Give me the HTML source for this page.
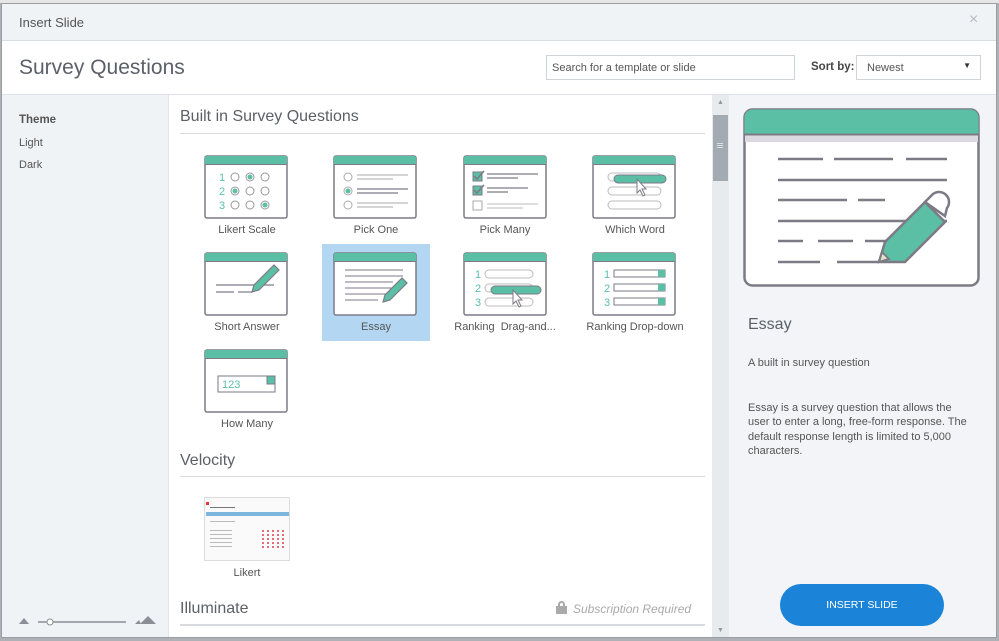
<!DOCTYPE html>
<html><head><meta charset="utf-8">
<style>
*{margin:0;padding:0;box-sizing:border-box}
body{width:999px;height:641px;overflow:hidden;background:#aeb1b5;font-family:"Liberation Sans",sans-serif;color:#555;position:relative}
.a{position:absolute}
.win{left:1px;top:3px;width:996px;height:635px;background:#fff;border:1px solid #9a9da2;overflow:hidden}
.lbl{position:absolute;font-size:11px;color:#555;text-align:center;width:130px}
svg.t{position:absolute}
</style></head><body>
<div class="a" style="left:0;top:0;width:999px;height:3px;background:#e6e6e6"></div>
<div class="a win">
 <div class="a" style="left:0;top:0;width:996px;height:37px;background:#f0f3f6;border-bottom:1px solid #d9dee3"></div>
 <div class="a" style="left:17px;top:11px;font-size:13px;color:#555">Insert Slide</div>
 <div class="a" style="left:967px;top:7px;font-size:16px;color:#b8bcc0">×</div>
 <div class="a" style="left:17px;top:52px;font-size:21px;color:#5c6068">Survey Questions</div>
 <div class="a" style="left:544px;top:51px;width:249px;height:25px;border:1px solid #cfd4d9;font-size:11px;color:#555;padding:6px 5px">Search for a template or slide</div>
 <div class="a" style="left:809px;top:57px;font-size:11.5px;color:#444;font-weight:bold">Sort by:</div>
 <div class="a" style="left:854px;top:51px;width:125px;height:25px;border:1px solid #cfd4d9;font-size:11px;color:#555;padding:6px 10px">Newest<span style="position:absolute;right:9px;top:5px;font-size:8px;color:#333">▼</span></div>
 <div class="a" style="left:0;top:90px;width:996px;height:1px;background:#dfe3e7"></div>
 <!-- sidebar -->
 <div class="a" style="left:0;top:91px;width:167px;height:545px;background:#f0f3f6;border-right:1px solid #e1e5e9"></div>
 <div class="a" style="left:17px;top:110px;font-size:11.5px;font-weight:bold;color:#555">Theme</div>
 <div class="a" style="left:17px;top:133px;font-size:11px;color:#555">Light</div>
 <div class="a" style="left:17px;top:155px;font-size:11px;color:#555">Dark</div>
 <svg class="a" style="left:14px;top:610px" width="145" height="14"><polygon points="3,10 8,4 13,10" fill="#8a8f96"/><line x1="22" y1="8" x2="110" y2="8" stroke="#8a8f96" stroke-width="1.5"/><circle cx="34" cy="8" r="3" fill="#fff" stroke="#8a8f96"/><polygon points="119,10 123,6 125,10" fill="#8a8f96"/><polygon points="124,10 132,2 140,10" fill="#8a8f96"/></svg>
 <!-- main -->
 <div class="a" style="left:178px;top:104px;font-size:16px;color:#5c6068">Built in Survey Questions</div>
 <div class="a" style="left:178px;top:129px;width:525px;height:1px;background:#d7dbdf"></div>
 <div class="a" style="left:320px;top:240px;width:108px;height:97px;background:#b3d7f2"></div>

 <div class="lbl" style="left:180px;top:220px">Likert Scale</div>
 <div class="lbl" style="left:309px;top:220px">Pick One</div>
 <div class="lbl" style="left:438px;top:220px">Pick Many</div>
 <div class="lbl" style="left:568px;top:220px">Which Word</div>
 <div class="lbl" style="left:180px;top:317px">Short Answer</div>
 <div class="lbl" style="left:309px;top:317px">Essay</div>
 <div class="lbl" style="left:438px;top:317px">Ranking&nbsp; Drag-and...</div>
 <div class="lbl" style="left:568px;top:317px">Ranking Drop-down</div>
 <div class="lbl" style="left:180px;top:414px">How Many</div>

 <svg class="t" style="left:202px;top:151px" width="84" height="64" viewBox="0 0 84 64"><rect x="1" y="1" width="82" height="62" rx="2" fill="#fff" stroke="#7d7a86" stroke-width="1.5"/><path d="M1 9V3a2 2 0 0 1 2-2h78a2 2 0 0 1 2 2v6z" fill="#5bbfa6"/><line x1="1" y1="9.5" x2="83" y2="9.5" stroke="#7d7a86"/>
 <g font-size="11" fill="#5bbfa6" font-family="Liberation Sans"><text x="15" y="26">1</text><text x="15" y="40">2</text><text x="15" y="54">3</text></g>
 <g fill="#fff" stroke="#999" stroke-width="1"><circle cx="31" cy="22" r="4"/><circle cx="46" cy="22" r="4"/><circle cx="61" cy="22" r="4"/><circle cx="31" cy="36" r="4"/><circle cx="46" cy="36" r="4"/><circle cx="61" cy="36" r="4"/><circle cx="31" cy="50" r="4"/><circle cx="46" cy="50" r="4"/><circle cx="61" cy="50" r="4"/></g>
 <g fill="#5bbfa6"><circle cx="46" cy="22" r="2.5"/><circle cx="31" cy="36" r="2.5"/><circle cx="61" cy="50" r="2.5"/></g></svg>

 <svg class="t" style="left:331px;top:151px" width="84" height="64" viewBox="0 0 84 64"><rect x="1" y="1" width="82" height="62" rx="2" fill="#fff" stroke="#7d7a86" stroke-width="1.5"/><path d="M1 9V3a2 2 0 0 1 2-2h78a2 2 0 0 1 2 2v6z" fill="#5bbfa6"/><line x1="1" y1="9.5" x2="83" y2="9.5" stroke="#7d7a86"/>
 <g fill="#fff" stroke="#aaa"><circle cx="15" cy="22" r="4"/><circle cx="15" cy="36" r="4"/><circle cx="15" cy="50" r="4"/></g><circle cx="15" cy="36" r="2.5" fill="#5bbfa6"/>
 <g stroke="#aaa" stroke-width="1"><line x1="24" y1="20" x2="75" y2="20"/><line x1="24" y1="24" x2="60" y2="24"/><line x1="24" y1="48" x2="75" y2="48"/><line x1="24" y1="52" x2="60" y2="52"/></g><g stroke="#7d7a86" stroke-width="1.3"><line x1="24" y1="34" x2="75" y2="34"/><line x1="24" y1="38" x2="65" y2="38"/></g></svg>

 <svg class="t" style="left:461px;top:151px" width="84" height="64" viewBox="0 0 84 64"><rect x="1" y="1" width="82" height="62" rx="2" fill="#fff" stroke="#7d7a86" stroke-width="1.5"/><path d="M1 9V3a2 2 0 0 1 2-2h78a2 2 0 0 1 2 2v6z" fill="#5bbfa6"/><line x1="1" y1="9.5" x2="83" y2="9.5" stroke="#7d7a86"/>
 <rect x="10" y="17" width="9" height="9" fill="#5bbfa6" stroke="#7d7a86"/><rect x="10" y="31" width="9" height="9" fill="#5bbfa6" stroke="#7d7a86"/><rect x="10" y="46" width="9" height="9" fill="#fff" stroke="#aaa"/>
 <path d="M11 21l3 3 7-8M11 35l3 3 7-8" stroke="#7d7a86" stroke-width="1.5" fill="none"/>
 <g stroke="#7d7a86" stroke-width="1.2"><line x1="24" y1="19" x2="75" y2="19"/><line x1="24" y1="23" x2="55" y2="23"/><line x1="24" y1="33" x2="65" y2="33"/><line x1="24" y1="37" x2="45" y2="37"/></g><g stroke="#bbb"><line x1="24" y1="49" x2="75" y2="49"/><line x1="24" y1="53" x2="60" y2="53"/></g></svg>

 <svg class="t" style="left:590px;top:151px" width="84" height="64" viewBox="0 0 84 64"><rect x="1" y="1" width="82" height="62" rx="2" fill="#fff" stroke="#7d7a86" stroke-width="1.5"/><path d="M1 9V3a2 2 0 0 1 2-2h78a2 2 0 0 1 2 2v6z" fill="#5bbfa6"/><line x1="1" y1="9.5" x2="83" y2="9.5" stroke="#7d7a86"/>
 <g fill="none" stroke="#bbb"><rect x="16" y="18" width="53" height="8" rx="4"/><rect x="16" y="32" width="53" height="8" rx="4"/><rect x="16" y="46" width="53" height="8" rx="4"/></g>
 <rect x="22" y="20" width="52" height="8" rx="4" fill="#5bbfa6" stroke="#7d7a86"/>
 <path d="M45 24l0 14 3-3 3 6 2-1-3-6 4 0z" fill="#fff" stroke="#7d7a86"/></svg>

 <svg class="t" style="left:202px;top:248px" width="84" height="64" viewBox="0 0 84 64"><rect x="1" y="1" width="82" height="62" rx="2" fill="#fff" stroke="#7d7a86" stroke-width="1.5"/><path d="M1 9V3a2 2 0 0 1 2-2h78a2 2 0 0 1 2 2v6z" fill="#5bbfa6"/><line x1="1" y1="9.5" x2="83" y2="9.5" stroke="#7d7a86"/>
 <g stroke="#7d7a86" stroke-width="1.2"><line x1="12" y1="33" x2="70" y2="33"/><line x1="12" y1="40" x2="30" y2="40"/><line x1="34" y1="40" x2="48" y2="40"/></g>
 <path d="M48 40l2-7 20-20 5 5-20 20z" fill="#5bbfa6" stroke="#7d7a86" stroke-width="1.2"/></svg>

 <svg class="t" style="left:331px;top:248px" width="84" height="64" viewBox="0 0 84 64"><rect x="1" y="1" width="82" height="62" rx="2" fill="#fff" stroke="#7d7a86" stroke-width="1.5"/><path d="M1 9V3a2 2 0 0 1 2-2h78a2 2 0 0 1 2 2v6z" fill="#5bbfa6"/><line x1="1" y1="9.5" x2="83" y2="9.5" stroke="#7d7a86"/>
 <g stroke="#7d7a86" stroke-width="1.1"><line x1="12" y1="18" x2="70" y2="18"/><line x1="12" y1="24" x2="70" y2="24"/><line x1="12" y1="30" x2="60" y2="30"/><line x1="12" y1="36" x2="60" y2="36"/><line x1="12" y1="42" x2="55" y2="42"/><line x1="12" y1="48" x2="45" y2="48"/></g>
 <path d="M50 50l2-7 17-17 5 5-17 17z" fill="#5bbfa6" stroke="#7d7a86" stroke-width="1.2"/></svg>

 <svg class="t" style="left:461px;top:248px" width="84" height="64" viewBox="0 0 84 64"><rect x="1" y="1" width="82" height="62" rx="2" fill="#fff" stroke="#7d7a86" stroke-width="1.5"/><path d="M1 9V3a2 2 0 0 1 2-2h78a2 2 0 0 1 2 2v6z" fill="#5bbfa6"/><line x1="1" y1="9.5" x2="83" y2="9.5" stroke="#7d7a86"/>
 <g font-size="11" fill="#5bbfa6"><text x="12" y="26">1</text><text x="12" y="40">2</text><text x="12" y="54">3</text></g>
 <g fill="none" stroke="#bbb"><rect x="22" y="18" width="48" height="8" rx="4"/><rect x="22" y="32" width="48" height="8" rx="4"/><rect x="22" y="46" width="48" height="8" rx="4"/></g>
 <rect x="28" y="34" width="50" height="8" rx="4" fill="#5bbfa6" stroke="#7d7a86"/>
 <path d="M50 38l0 14 3-3 3 6 2-1-3-6 4 0z" fill="#fff" stroke="#7d7a86"/></svg>

 <svg class="t" style="left:590px;top:248px" width="84" height="64" viewBox="0 0 84 64"><rect x="1" y="1" width="82" height="62" rx="2" fill="#fff" stroke="#7d7a86" stroke-width="1.5"/><path d="M1 9V3a2 2 0 0 1 2-2h78a2 2 0 0 1 2 2v6z" fill="#5bbfa6"/><line x1="1" y1="9.5" x2="83" y2="9.5" stroke="#7d7a86"/>
 <g font-size="11" fill="#5bbfa6"><text x="12" y="26">1</text><text x="12" y="40">2</text><text x="12" y="54">3</text></g>
 <g fill="#fff" stroke="#7d7a86"><rect x="22" y="18" width="51" height="7"/><rect x="22" y="32" width="51" height="7"/><rect x="22" y="46" width="51" height="7"/></g>
 <g fill="#5bbfa6"><rect x="66" y="18" width="7" height="7"/><rect x="66" y="32" width="7" height="7"/><rect x="66" y="46" width="7" height="7"/></g></svg>

 <svg class="t" style="left:202px;top:345px" width="84" height="64" viewBox="0 0 84 64"><rect x="1" y="1" width="82" height="62" rx="2" fill="#fff" stroke="#7d7a86" stroke-width="1.5"/><path d="M1 9V3a2 2 0 0 1 2-2h78a2 2 0 0 1 2 2v6z" fill="#5bbfa6"/><line x1="1" y1="9.5" x2="83" y2="9.5" stroke="#7d7a86"/>
 <rect x="14" y="27" width="57" height="16" fill="#fff" stroke="#7d7a86"/><text x="18" y="39" font-size="11" fill="#5bbfa6">123</text><rect x="63" y="27" width="8" height="8" fill="#5bbfa6" stroke="#7d7a86"/><line x1="63" y1="35" x2="71" y2="35" stroke="#7d7a86"/></svg>

 <div class="a" style="left:178px;top:448px;font-size:16px;color:#5c6068">Velocity</div>
 <div class="a" style="left:178px;top:472px;width:525px;height:1px;background:#d7dbdf"></div>
 <div class="a" style="left:202px;top:493px;width:86px;height:64px;border:1px solid #ddd;background:#fafafa">
  <div class="a" style="left:1px;top:4px;width:3px;height:3px;background:#e33"></div>
  <div class="a" style="left:5px;top:9px;width:25px;height:1px;background:#777"></div>
  <div class="a" style="left:1px;top:14px;width:83px;height:4px;background:#7ab6de"></div>
  <div class="a" style="left:5px;top:23px;width:25px;height:1px;background:#bbb"></div>
  <div class="a" style="left:5px;top:32px;width:22px;height:19px;background:repeating-linear-gradient(180deg,#bbb 0 1px,transparent 1px 4px)"></div>
  <div class="a" style="left:57px;top:32px;width:22px;height:19px;background:repeating-linear-gradient(180deg,#e56a7a 0 2px,transparent 2px 4px);-webkit-mask:repeating-linear-gradient(90deg,#000 0 2px,transparent 2px 5px);mask:repeating-linear-gradient(90deg,#000 0 2px,transparent 2px 5px)"></div>
 </div>
 <div class="lbl" style="left:180px;top:563px">Likert</div>
 <div class="a" style="left:178px;top:596px;font-size:16px;color:#5c6068">Illuminate</div>
 <div class="a" style="left:554px;top:597px;width:11px;height:13px"><div class="a" style="left:2px;top:0;width:7px;height:8px;border:2px solid #aaa;border-radius:4px 4px 0 0"></div><div class="a" style="left:0;top:5px;width:11px;height:8px;background:#aaa"></div></div>
 <div class="a" style="left:571px;top:598px;font-size:12px;color:#aaa;font-style:italic">Subscription Required</div>
 <div class="a" style="left:178px;top:620px;width:525px;height:2px;background:#d7dbdf"></div>
 <div class="a" style="left:710px;top:91px;width:17px;height:545px;background:#e8ebee"></div>
 <div class="a" style="left:711px;top:111px;width:15px;height:66px;background:#a1abb1"></div>
 <div class="a" style="left:715px;top:139px;width:6px;height:1px;background:#ddd;box-shadow:0 2px #ddd,0 4px #ddd"></div>
 <div class="a" style="left:715px;top:95px;font-size:7px;color:#999">▲</div>
 <div class="a" style="left:715px;top:623px;font-size:7px;color:#999">▼</div>
 <div class="a" style="left:727px;top:91px;width:269px;height:545px;background:#f2f4f7"></div>
 <svg class="a" style="left:741px;top:104px" width="238" height="180" viewBox="0 0 238 180">
  <rect x="1.5" y="1.5" width="234" height="176" rx="8" fill="#fff" stroke="#7d7a86" stroke-width="2.5"/>
  <path d="M1.5 26V9.5a8 8 0 0 1 8-8h218a8 8 0 0 1 8 8V26z" fill="#5bbfa6"/>
  <rect x="2" y="27" width="233" height="7" fill="#dcdae0"/>
  <line x1="1.5" y1="26.5" x2="235.5" y2="26.5" stroke="#7d7a86" stroke-width="2"/>
  <g stroke="#7d7a86" stroke-width="2.5"><line x1="35" y1="51" x2="80" y2="51"/><line x1="91" y1="51" x2="150" y2="51"/><line x1="163" y1="51" x2="204" y2="51"/><line x1="35" y1="72" x2="204" y2="72"/><line x1="35" y1="92" x2="104" y2="92"/><line x1="115" y1="92" x2="142" y2="92"/><line x1="35" y1="113" x2="204" y2="113"/><line x1="35" y1="133" x2="60" y2="133"/><line x1="75" y1="133" x2="110" y2="133"/><line x1="122" y1="133" x2="150" y2="133"/><line x1="35" y1="154" x2="77" y2="154"/><line x1="94" y1="154" x2="136" y2="154"/></g>
  <path d="M136 154l6-20 40-40 20 20-40 40z" fill="#5bbfa6" stroke="#7d7a86" stroke-width="2.5"/>
  <path d="M182 94l8-8a10 10 0 0 1 14 14l-2 8z" fill="#fff" stroke="#7d7a86" stroke-width="2.5"/>
  <path d="M136 154l3-10 7 7z" fill="#dfe8c8" stroke="#7d7a86" stroke-width="2"/>
 </svg>
 <div class="a" style="left:746px;top:312px;font-size:16px;color:#5c6068">Essay</div>
 <div class="a" style="left:746px;top:353px;font-size:11px;color:#555">A built in survey question</div>
 <div class="a" style="left:746px;top:397px;width:228px;font-size:11px;line-height:14.3px;color:#555">Essay is a survey question that allows the user to enter a long, free-form response. The default response length is limited to 5,000 characters.</div>
 <div class="a" style="left:778px;top:580px;width:164px;height:42px;border-radius:21px;background:#1b84d8;color:#fff;font-size:10.5px;text-align:center;line-height:42px">INSERT SLIDE</div>
</div>
</body></html>
